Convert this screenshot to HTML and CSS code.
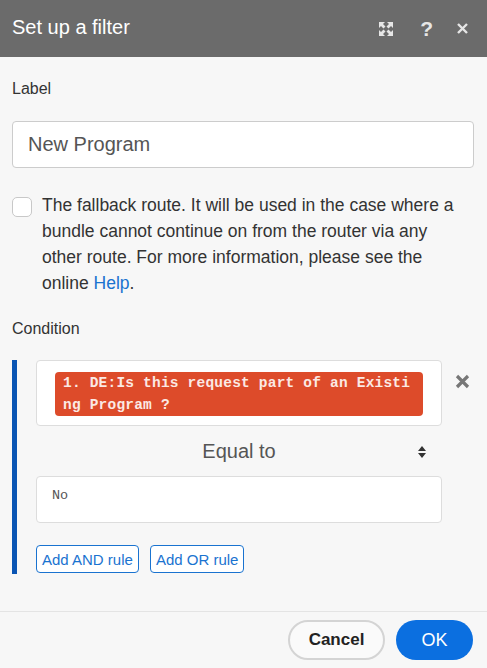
FILE: index.html
```html
<!DOCTYPE html>
<html>
<head>
<meta charset="utf-8">
<link rel="stylesheet" href="styles.css">
</head>
<body>
<div class="dialog">
  <header class="head">
    <div class="title">Set up a filter</div>
    <div class="head-icons">
      <svg class="ic" width="16" height="16" viewBox="0 0 16 16"><g fill="#e6e6e6"><path d="M1 1h6L5 3l2.5 2.5-2 2L3 5 1 7z"/><path d="M15 1v6l-2-2-2.5 2.5-2-2L11 3 9 1z"/><path d="M1 15V9l2 2 2.5-2.5 2 2L5 13l2 2z"/><path d="M15 15H9l2-2-2.5-2.5 2-2L13 11l2-2z"/></g></svg>
      <span class="q">?</span>
      <svg class="ic" width="13" height="13" viewBox="0 0 13 13"><path d="M2 2l9 9M11 2l-9 9" stroke="#e6e6e6" stroke-width="2.4"/></svg>
    </div>
  </header>
  <main class="body">
    <div class="lbl">Label</div>
    <div class="input">New Program</div>
    <div class="fallback">
      <span class="cb"></span>
      <p>The fallback route. It will be used in the case where a bundle cannot continue on from the router via any other route. For more information, please see the online <a>Help</a>.</p>
    </div>
    <div class="lbl cond-lbl">Condition</div>
    <div class="group">
      <div class="rule">
        <div class="rule-main">
          <div class="field"><span class="pill">1. DE:Is this request part of an Existing Program ?</span></div>
          <div class="op"><span>Equal to</span>
            <svg class="arr" width="10" height="14" viewBox="0 0 10 14"><path d="M5 1l4 5H1zM5 13l4-5H1z" fill="#333"/></svg>
          </div>
          <div class="value">No</div>
        </div>
        <svg class="del" width="15" height="15" viewBox="0 0 15 15"><path d="M2 2l11 11M13 2L2 13" stroke="#777" stroke-width="3.2"/></svg>
      </div>
      <div class="adds">
        <span class="btn-o">Add AND rule</span>
        <span class="btn-o">Add OR rule</span>
      </div>
    </div>
  </main>
  <footer class="foot">
    <span class="cancel">Cancel</span>
    <span class="ok">OK</span>
  </footer>
</div>
</body>
</html>
```
FILE: styles.css
```css
* { box-sizing: border-box; }
html, body { margin: 0; padding: 0; }
body { font-family: "Liberation Sans", Arial, sans-serif; background: #f7f7f7; color: #333; }
.dialog { width: 487px; height: 668px; display: flex; flex-direction: column; background: #f7f7f7; }
.head { height: 57px; background: #6b6b6b; display: flex; align-items: center; justify-content: space-between; padding: 0 18px 0 12px; }
.title { color: #fff; font-size: 20px; padding-bottom: 2px; }
.head-icons { display: flex; align-items: center; }
.ic { display: block; }
.head-icons .ic:first-child { margin-right: 26px; }
.q { color: #e6e6e6; font-weight: bold; font-size: 21px; margin-right: 23px; line-height: 1; }
.body { flex: 1; padding: 0 13px 0 12px; }
.lbl { font-size: 16px; line-height: 18px; }
.body > .lbl:first-child { margin-top: 23px; }
.input { margin-top: 23px; height: 47px; background: #fff; border: 1px solid #ccc; border-radius: 4px; padding: 0 15px; display: flex; align-items: center; font-size: 20px; color: #555; }
.fallback { display: flex; margin-top: 24px; padding-right: 12px; }
.cb { flex: none; width: 20px; height: 20px; border: 1px solid #c8c8c8; border-radius: 5px; background: #fff; margin-top: 5px; margin-right: 10px; }
.fallback p { margin: 0; font-size: 17.5px; line-height: 26px; color: #333; }
.fallback a { color: #1a73d0; }
.cond-lbl { margin-top: 24px; }
.group { margin-top: 22px; border-left: 5px solid #0a55b4; padding-left: 19px; padding-bottom: 1px; }
.rule { display: flex; align-items: flex-start; }
.rule-main { flex: none; width: 406px; }
.field { background: #fff; border: 1px solid #ddd; border-radius: 4px; padding: 11px 18px 9px 18px; height: 66px; }
.pill { display: block; background: #dd4b2a; color: #fbe9e4; border-radius: 4px; font-family: "Liberation Mono", "Courier New", monospace; font-weight: bold; font-size: 14.5px; line-height: 22px; padding: 0 8px; letter-spacing: 0.2px; word-break: break-all; }
.op { position: relative; height: 50px; display: flex; align-items: center; justify-content: center; font-size: 20px; color: #555; }
.op .arr { position: absolute; right: 15px; top: 19px; }
.value { height: 47px; background: #fff; border: 1px solid #ddd; border-radius: 4px; padding: 11px 15px; font-family: "Liberation Mono", "Courier New", monospace; font-size: 13.5px; color: #555; }
.del { margin-left: 13px; margin-top: 14px; }
.adds { display: flex; gap: 11px; margin-top: 22px; }
.btn-o { border: 1px solid #1a73d0; border-radius: 4px; color: #1a73d0; font-size: 15px; height: 28px; padding: 0 5px; display: flex; align-items: center; background: #fff; }
.foot { height: 57px; border-top: 1px solid #e4e4e4; display: flex; justify-content: flex-end; align-items: center; gap: 11px; padding: 0 14px 0 0; }
.cancel { width: 97px; height: 40px; border: 2px solid #d4d4d4; border-radius: 20px; display: flex; align-items: center; justify-content: center; font-weight: bold; font-size: 17px; color: #222; background: #fafafa; }
.ok { width: 77px; height: 40px; border-radius: 20px; background: #0b6fe0; color: #fff; font-size: 18px; display: flex; align-items: center; justify-content: center; }
```
